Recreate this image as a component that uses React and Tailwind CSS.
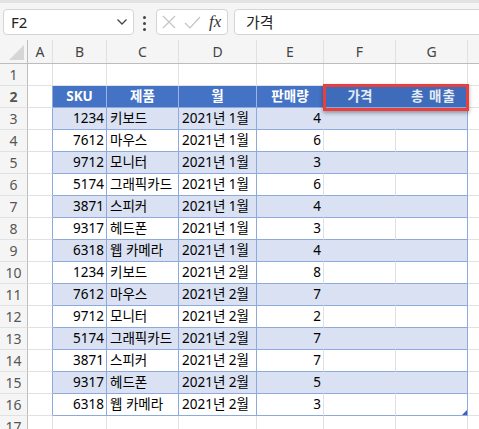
const rows = [
  ["1234", "키보드", "2021년 1월", "4"],
  ["7612", "마우스", "2021년 1월", "6"],
  ["9712", "모니터", "2021년 1월", "3"],
  ["5174", "그래픽카드", "2021년 1월", "6"],
  ["3871", "스피커", "2021년 1월", "4"],
  ["9317", "헤드폰", "2021년 1월", "3"],
  ["6318", "웹 카메라", "2021년 1월", "4"],
  ["1234", "키보드", "2021년 2월", "8"],
  ["7612", "마우스", "2021년 2월", "7"],
  ["9712", "모니터", "2021년 2월", "2"],
  ["5174", "그래픽카드", "2021년 2월", "7"],
  ["3871", "스피커", "2021년 2월", "7"],
  ["9317", "헤드폰", "2021년 2월", "5"],
  ["6318", "웹 카메라", "2021년 2월", "3"],
];

const font = { fontFamily: '"Segoe UI", "Noto Sans", "Noto Sans CJK KR", sans-serif' };

function RowHead({ n }) {
  return (
    <div className="flex w-[28px] shrink-0 items-center justify-center border-r border-b border-r-[#bdbdbd] border-b-[#e1e1e1] bg-[#f5f5f5] text-[14px] text-[#555]">
      {n}
    </div>
  );
}

function FormulaBar() {
  return (
    <div className="relative h-[40px] bg-[#f5f5f5]">
      <div className="h-[3px] bg-[#e3e3e3]" />
      <div className="absolute left-[3px] top-[9px] flex h-[26px] w-[131px] items-center justify-between rounded-[4px] border border-[#d4d4d4] bg-white pl-[7px] pr-[5px] text-[15px] text-[#222]">
        <span>F2</span>
        <svg width="12" height="8" viewBox="0 0 12 8" fill="none" stroke="#444" strokeWidth="1.3">
          <path d="M1.5 1.5 6 6l4.5-4.5" />
        </svg>
      </div>
      <div className="absolute left-[143px] top-[16px] flex flex-col gap-[3px]">
        <span className="h-[3px] w-[3px] rounded-full bg-[#444]" />
        <span className="h-[3px] w-[3px] rounded-full bg-[#444]" />
        <span className="h-[3px] w-[3px] rounded-full bg-[#444]" />
      </div>
      <div className="absolute left-[156px] top-[9px] flex h-[26px] w-[72px] items-center rounded-[4px] border border-[#d4d4d4] bg-white">
        <svg className="ml-[5px]" width="14" height="14" viewBox="0 0 14 14" stroke="#c4c4c4" strokeWidth="1.2">
          <path d="M1 1l12 12M13 1 1 13" />
        </svg>
        <svg className="ml-[8px]" width="17" height="13" viewBox="0 0 17 13" fill="none" stroke="#c4c4c4" strokeWidth="1.2">
          <path d="M1 7l5 5L16 1" />
        </svg>
        <span className="ml-[8px] text-[17px] italic text-[#333]" style={{ fontFamily: '"Liberation Serif", serif' }}>
          fx
        </span>
      </div>
      <div className="absolute left-[234px] top-[9px] flex h-[26px] w-[260px] items-center rounded-[4px] border border-[#d4d4d4] bg-white pl-[11px] text-[15px] text-[#222]">
        가격
      </div>
    </div>
  );
}

const widths = ["w-[25px]", "w-[54px]", "w-[72px]", "w-[78px]", "w-[67px]", "w-[72px]", "w-[72px]"];

function ColHeads() {
  const letters = ["A", "B", "C", "D", "E", "F", "G"];
  return (
    <div className="flex h-[24px] border-b border-[#bdbdbd] bg-[#f5f5f5] text-[14px] text-[#444]">
      <div className="relative w-[28px] shrink-0 border-r border-[#bdbdbd]">
        <svg className="absolute bottom-[3px] right-[3px]" width="15" height="15" viewBox="0 0 15 15">
          <path d="M15 0v15H0z" fill="#d6d6d6" />
        </svg>
      </div>
      {letters.map((l, i) => (
        <div key={l} className={`${widths[i]} flex shrink-0 items-center justify-center border-r border-[#e1e1e1]`}>
          {l}
        </div>
      ))}
      <div className="flex-1" />
    </div>
  );
}

export default function App() {
  return (
    <div className="h-[429px] w-[479px] overflow-hidden bg-white" style={font}>
      <FormulaBar />
      <div className="relative">
        <ColHeads />

        {/* row 1 */}
        <div className="flex h-[22px]">
          <RowHead n={1} />
          {widths.map((w, i) => (
            <div key={i} className={`${w} shrink-0 border-r border-b border-[#e1e1e1]`} />
          ))}
          <div className="flex-1 border-b border-[#e1e1e1]" />
        </div>

        {/* row 2: table header */}
        <div className="flex h-[22px] text-[13.5px] font-bold text-white">
          <RowHead n={2} />
          <div className="w-[25px] shrink-0 border-r border-b border-r-[#8ea9db] border-b-[#e1e1e1]" />
          {["SKU", "제품", "월", "판매량"].map((t, i) => (
            <div
              key={t}
              className={`${widths[i + 1]} flex shrink-0 items-center justify-center border-r border-b border-r-[#9db4e0] border-b-[#8ea9db] bg-[#4472c4]`}
            >
              {t}
            </div>
          ))}
          <div className="flex w-[72px] shrink-0 items-center justify-center border-b border-[#8ea9db] bg-[#3f6bbb] text-[#e6ebf4]">
            가격
          </div>
          <div className="flex w-[72px] shrink-0 items-center justify-center border-r border-b border-[#8ea9db] bg-[#3f6bbb] pl-[4px] tracking-[1px] text-[#e6ebf4]">
            총 매출
          </div>
          <div className="flex-1 border-b border-[#e1e1e1]" />
        </div>

        {rows.map((r, idx) => {
          const band = idx % 2 === 0;
          const bg = band ? "bg-[#d9e1f2]" : "bg-white";
          const inner = band ? "border-r-[#d9e1f2]" : "border-r-[#e1e1e1]";
          return (
            <div key={idx} className="flex h-[22px] text-[13.5px] text-black">
              <RowHead n={idx + 3} />
              <div className="w-[25px] shrink-0 border-r border-b border-r-[#8ea9db] border-b-[#e1e1e1]" />
              <div className={`w-[54px] shrink-0 border-r border-b border-[#8ea9db] pr-[2px] text-right leading-[21px] ${bg}`}>{r[0]}</div>
              <div className={`w-[72px] shrink-0 border-r border-b border-[#8ea9db] pl-[3px] leading-[21px] ${bg}`}>{r[1]}</div>
              <div className={`w-[78px] shrink-0 border-r border-b border-[#8ea9db] pl-[3px] leading-[21px] ${bg}`}>{r[2]}</div>
              <div className={`w-[67px] shrink-0 border-r border-b border-b-[#8ea9db] pr-[2px] text-right leading-[21px] ${inner} ${bg}`}>{r[3]}</div>
              <div className={`w-[72px] shrink-0 border-r border-b border-b-[#8ea9db] ${inner} ${bg}`} />
              <div className={`relative w-[72px] shrink-0 border-r border-b border-[#8ea9db] ${bg}`}>
                {idx === rows.length - 1 && (
                  <svg className="absolute bottom-0 right-0" width="5" height="5" viewBox="0 0 5 5">
                    <path d="M5 0v5H0z" fill="#3f5fb5" />
                  </svg>
                )}
              </div>
              <div className="flex-1 border-b border-[#e1e1e1]" />
            </div>
          );
        })}

        {/* row 17, partly visible */}
        <div className="flex h-[22px]">
          <RowHead n={17} />
          {widths.map((w, i) => (
            <div key={i} className={`${w} shrink-0 border-r border-[#e1e1e1]`} />
          ))}
        </div>

        {/* selection outline F2:G2 */}
        <div className="pointer-events-none absolute left-[323px] top-[44px] h-[27px] w-[146px] border-[3px] border-[#e8403f] shadow-[0_2px_4px_rgba(0,0,0,0.35)]" />
      </div>
    </div>
  );
}
